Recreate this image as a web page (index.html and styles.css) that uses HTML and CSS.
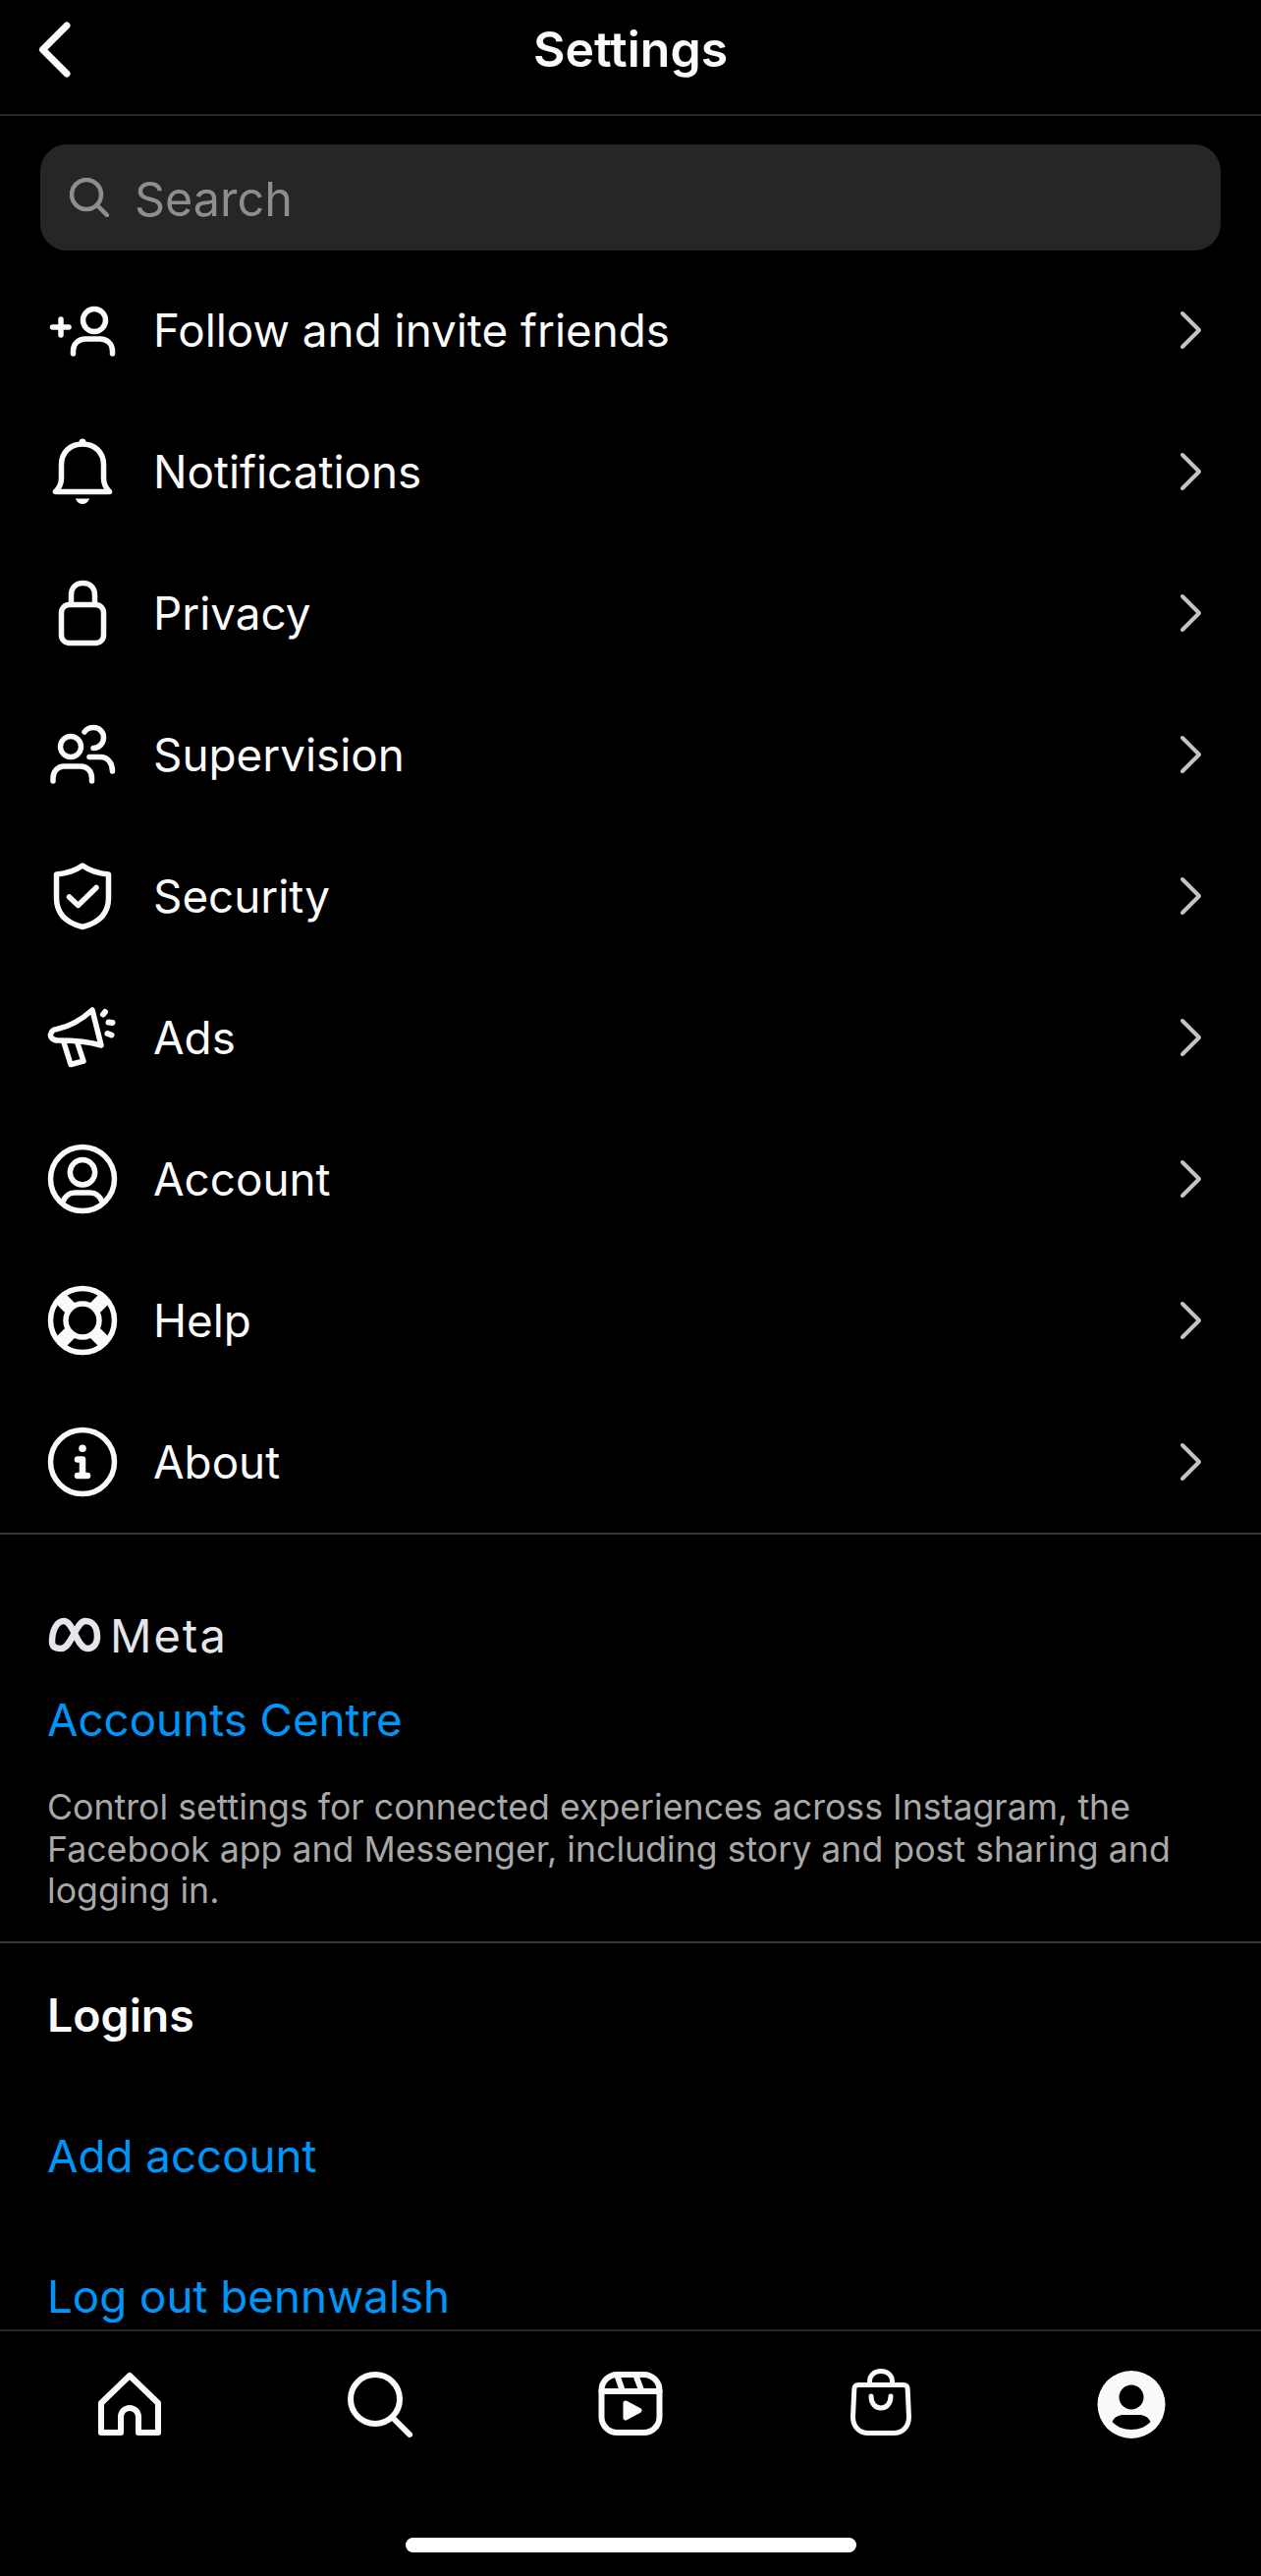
FILE: index.html
```html
<!DOCTYPE html>
<html lang="en">
<head>
    <meta charset="UTF-8">
    <meta name="viewport" content="width=device-width, initial-scale=1.0">
    <title>Settings</title>
    <link rel="stylesheet" href="styles.css">
</head>
<body>
    <div class="screen">
        <header class="topbar">
            <svg class="back" viewBox="0 0 40 60"><path d="M32 6 L7.5 30.5 L32 55"/></svg>
            <h1 class="title">Settings</h1>
        </header>

        <div class="search">
            <svg class="search-icon" viewBox="0 0 40 40"><circle cx="17" cy="17" r="15"/><path d="M28 28 L38 38"/></svg>
            <span class="search-text">Search</span>
        </div>

        <ul class="menu">
            <li class="row">
                <svg class="row-icon" viewBox="0 0 72 72"><circle cx="48" cy="26" r="11.5"/><path d="M26.5 60 V57 C26.5 50 32 45 39 45 H54 C61 45 66.5 50 66.5 57 V60"/><path d="M5.5 33 H22 M14 25 V41"/></svg>
                <span class="row-label">Follow and invite friends</span>
                <svg class="chevron" viewBox="0 0 28 44"><path d="M3 5 L20 22 L3 39"/></svg>
            </li>
            <li class="row">
                <svg class="row-icon" viewBox="0 0 72 72"><path d="M8.5 56.5 H63.5 C60 53 57.5 49 57.5 43 V29 C57.5 16 48 8 36 8 C24 8 14.5 16 14.5 29 V43 C14.5 49 12 53 8.5 56.5 Z"/><circle class="solid" cx="36" cy="6" r="3.5"/><path class="solid" d="M29 63.5 H43 C42 67 39 69 36 69 C33 69 30 67 29 63.5 Z"/></svg>
                <span class="row-label">Notifications</span>
                <svg class="chevron" viewBox="0 0 28 44"><path d="M3 5 L20 22 L3 39"/></svg>
            </li>
            <li class="row">
                <svg class="row-icon" viewBox="0 0 72 72"><rect x="14.5" y="27.5" width="43" height="39" rx="8"/><path d="M24.5 27 V18 C24.5 10 29.5 5.5 36.5 5.5 C43.5 5.5 48.5 10 48.5 18 V27"/></svg>
                <span class="row-label">Privacy</span>
                <svg class="chevron" viewBox="0 0 28 44"><path d="M3 5 L20 22 L3 39"/></svg>
            </li>
            <li class="row">
                <svg class="row-icon" viewBox="0 0 72 72"><circle cx="24" cy="28" r="10.5"/><path d="M6 63 V60 C6 53 11 48 17 48 H34 C41 48 45.5 53 45.5 60 V63"/><path d="M38 13 C40 10 44 8.5 47.5 8.5 C53 8.5 57.5 13 57.5 18.5 C57.5 24.5 53 29.5 47 29.5"/><path d="M43 38.5 H54 C62 38.5 66.5 45 66.5 53"/></svg>
                <span class="row-label">Supervision</span>
                <svg class="chevron" viewBox="0 0 28 44"><path d="M3 5 L20 22 L3 39"/></svg>
            </li>
            <li class="row">
                <svg class="row-icon" viewBox="0 0 72 72"><path d="M36 5 C43 10 52 13 62.5 14 V38 C62.5 54 52 63.5 36 67.5 C20 63.5 9.5 54 9.5 38 V14 C20 13 29 10 36 5 Z"/><path d="M22.5 37 L31.5 45.5 L50 27.5"/></svg>
                <span class="row-label">Security</span>
                <svg class="chevron" viewBox="0 0 28 44"><path d="M3 5 L20 22 L3 39"/></svg>
            </li>
            <li class="row">
                <svg class="row-icon" viewBox="0 0 72 72"><path d="M10 27.5 C22 25 35 18 46 8 L55 44 C42 40 28 39 11 39 C5 39 3 35 3.5 33 C4 30 6 28 10 27.5 Z"/><path d="M17 41 L24 63.5 L37 60 L31 42"/><path class="dots" d="M57 12.5 L59 10 M62.5 20.5 L66.5 21 M61.5 32 L65.5 33.5"/></svg>
                <span class="row-label">Ads</span>
                <svg class="chevron" viewBox="0 0 28 44"><path d="M3 5 L20 22 L3 39"/></svg>
            </li>
            <li class="row">
                <svg class="row-icon" viewBox="0 0 72 72"><circle cx="36" cy="36" r="32.5"/><circle cx="36" cy="29.3" r="12.7"/><path d="M15.5 60 C18 54 22.5 50 28 50 H44 C49.5 50 54 54 56.5 60"/></svg>
                <span class="row-label">Account</span>
                <svg class="chevron" viewBox="0 0 28 44"><path d="M3 5 L20 22 L3 39"/></svg>
            </li>
            <li class="row">
                <svg class="row-icon" viewBox="0 0 72 72"><circle cx="36" cy="36" r="32.5"/><circle cx="36" cy="36" r="17"/><path class="thick" d="M13 13 L24 24 M59 13 L48 24 M13 59 L24 48 M59 59 L48 48"/></svg>
                <span class="row-label">Help</span>
                <svg class="chevron" viewBox="0 0 28 44"><path d="M3 5 L20 22 L3 39"/></svg>
            </li>
            <li class="row">
                <svg class="row-icon" viewBox="0 0 72 72"><circle cx="36" cy="36" r="32.5"/><circle class="solid" cx="36" cy="22.3" r="3.8"/><path class="stem" d="M31 33.5 H36 V50 M31 50 H41"/></svg>
                <span class="row-label">About</span>
                <svg class="chevron" viewBox="0 0 28 44"><path d="M3 5 L20 22 L3 39"/></svg>
            </li>
        </ul>

        <section class="meta-block">
            <div class="meta-logo">
                <svg class="meta-mark" viewBox="0 0 56 36"><path d="M5 25 C5 13 10 4 17 4 C27 4 30 32 41 32 C47 32 51 27 51 20 C51 11 47 4 39 4 C29 4 25 32 14 32 C8 32 5 30 5 25 Z"/></svg>
                <span class="meta-name">Meta</span>
            </div>
            <a class="link accounts-link">Accounts Centre</a>
            <p class="meta-desc">Control settings for connected experiences across Instagram, the Facebook app and Messenger, including story and post sharing and logging in.</p>
        </section>

        <section class="logins">
            <h2 class="logins-title">Logins</h2>
            <a class="link login-row">Add account</a>
            <a class="link login-row">Log out bennwalsh</a>
        </section>

        <nav class="tabbar">
            <svg class="tab" viewBox="0 0 72 72"><path d="M7 65 V35 L36 7 L65 35 V65 H45 V49 C45 44 41 40 36 40 C31 40 27 44 27 49 V65 Z"/></svg>
            <svg class="tab" viewBox="0 0 72 72"><circle cx="31" cy="31" r="25"/><path d="M51 52 L66 67"/></svg>
            <svg class="tab" viewBox="0 0 72 72"><rect x="6.5" y="6" width="59" height="59" rx="16"/><path d="M6.5 23 H65.5 M22.5 7 L28 23 M41.5 7 L47.5 23"/><path class="play" d="M31 35 L45 42.5 L31 50 Z"/></svg>
            <svg class="tab bag" viewBox="0 0 72 72"><path d="M13 16.5 H59 C62 16.5 63 18 63.2 21 L64.5 49 C64.5 59 58 65.5 49 65.5 H23 C14 65.5 7.5 59 7.5 49 L8.8 21 C9 18 10 16.5 13 16.5 Z"/><path d="M24.5 16 V13 C24.5 7 29 2.5 36 2.5 C43 2.5 47.5 7 47.5 13 V16"/><path d="M26 28 C26 35 30 40 36 40 C42 40 46 35 46 28"/></svg>
            <svg class="tab" viewBox="0 0 72 72"><path class="solid" fill-rule="evenodd" d="M36 2 A34.5 34.5 0 1 1 36 71 A34.5 34.5 0 1 1 36 2 Z M36 16.5 A12.5 12.5 0 1 0 36 41.5 A12.5 12.5 0 1 0 36 16.5 Z M16.5 54 C19 49 23 47 28 47 H44 C49 47 53 49 55.5 54 C51 59 44 62 36 62 C28 62 21 59 16.5 54 Z"/></svg>
        </nav>

        <div class="home-area"><div class="home-bar"></div></div>
    </div>
</body>
</html>
```

FILE: styles.css
```css
* {
    box-sizing: border-box;
}

body {
    margin: 0;
    background: #000;
    color: #fafafa;
    font-family: Inter, "Liberation Sans", sans-serif;
}

svg {
    display: block;
    fill: none;
    stroke: #fafafa;
    stroke-linecap: round;
    stroke-linejoin: round;
}

svg .solid {
    fill: #fafafa;
    stroke: none;
}

.screen {
    width: 1284px;
    height: 2622px;
    overflow: hidden;
    display: flex;
    flex-direction: column;
}

/* top bar */
.topbar {
    height: 118px;
    display: flex;
    justify-content: center;
    align-items: center;
    border-bottom: 2px solid #262626;
    padding-bottom: 16px;
    position: relative;
}

.back {
    position: absolute;
    left: 36px;
    top: 20px;
    width: 40px;
    height: 60px;
    stroke-width: 7;
}

.title {
    margin: 0;
    font-size: 50px;
    font-weight: 600;
}

/* search */
.search {
    margin: 29px 41px 0;
    height: 108px;
    background: #262626;
    border-radius: 27px;
    display: flex;
    align-items: center;
    padding-left: 30px;
    gap: 26px;
}

.search-icon {
    width: 40px;
    height: 40px;
    stroke: #8e8e8e;
    stroke-width: 4.5;
}

.search-text {
    font-size: 48.5px;
    color: #8e8e8e;
    padding-top: 2px;
}

/* menu */
.menu {
    list-style: none;
    margin: 9px 0 0;
    padding: 0;
    border-bottom: 2px solid #363636;
}

.row {
    height: 144px;
    display: flex;
    align-items: center;
    padding-left: 48px;
    padding-right: 55px;
}

.row-icon {
    width: 72px;
    height: 72px;
    stroke-width: 5.5;
    margin-right: 36px;
}

.row-icon .thick {
    stroke-width: 14;
    stroke-linecap: butt;
}

.row-icon .stem {
    stroke-width: 6.5;
}

.row-icon .dots {
    stroke-width: 6;
}

.row-label {
    flex: 1;
    font-size: 45.8px;
}

.chevron {
    width: 28px;
    height: 44px;
    stroke: #c4c4c4;
    stroke-width: 4;
}

/* meta block */
.meta-block {
    height: 416px;
    padding: 80px 48px 0;
    border-bottom: 2px solid #363636;
}

.meta-logo {
    display: flex;
    align-items: center;
    gap: 8px;
    height: 44px;
}

.meta-mark {
    width: 56px;
    height: 36px;
    stroke: #e4e6eb;
    stroke-width: 6.5;
}

.meta-name {
    font-size: 47px;
    letter-spacing: 2px;
    color: #e4e6eb;
}

.link {
    display: block;
    color: #0095f6;
    font-size: 45.7px;
}

.accounts-link {
    margin-top: 37px;
}

.meta-desc {
    margin: 40px 0 0;
    font-size: 35.7px;
    line-height: 42.7px;
    color: #a8a8a8;
}

/* logins */
.logins {
    flex: 1;
    padding: 0 48px;
    overflow: hidden;
}

.logins-title {
    margin: 45px 0 0;
    font-size: 46.5px;
    font-weight: 600;
}

.login-row {
    margin-top: 88px;
}

/* bottom nav */
.tabbar {
    height: 150px;
    border-top: 2px solid #262626;
    display: grid;
    grid-template-columns: repeat(5, 1fr);
    justify-items: center;
    align-items: center;
    padding: 0 4px;
}

.tab {
    width: 72px;
    height: 72px;
    stroke-width: 6;
}

.bag {
    stroke-width: 5;
}

.tab .play {
    fill: #fafafa;
    stroke-width: 5;
}

.home-area {
    height: 101px;
    display: flex;
    justify-content: center;
    padding-top: 62px;
}

.home-bar {
    width: 459px;
    height: 15px;
    background: #fff;
    border-radius: 8px;
}
```
